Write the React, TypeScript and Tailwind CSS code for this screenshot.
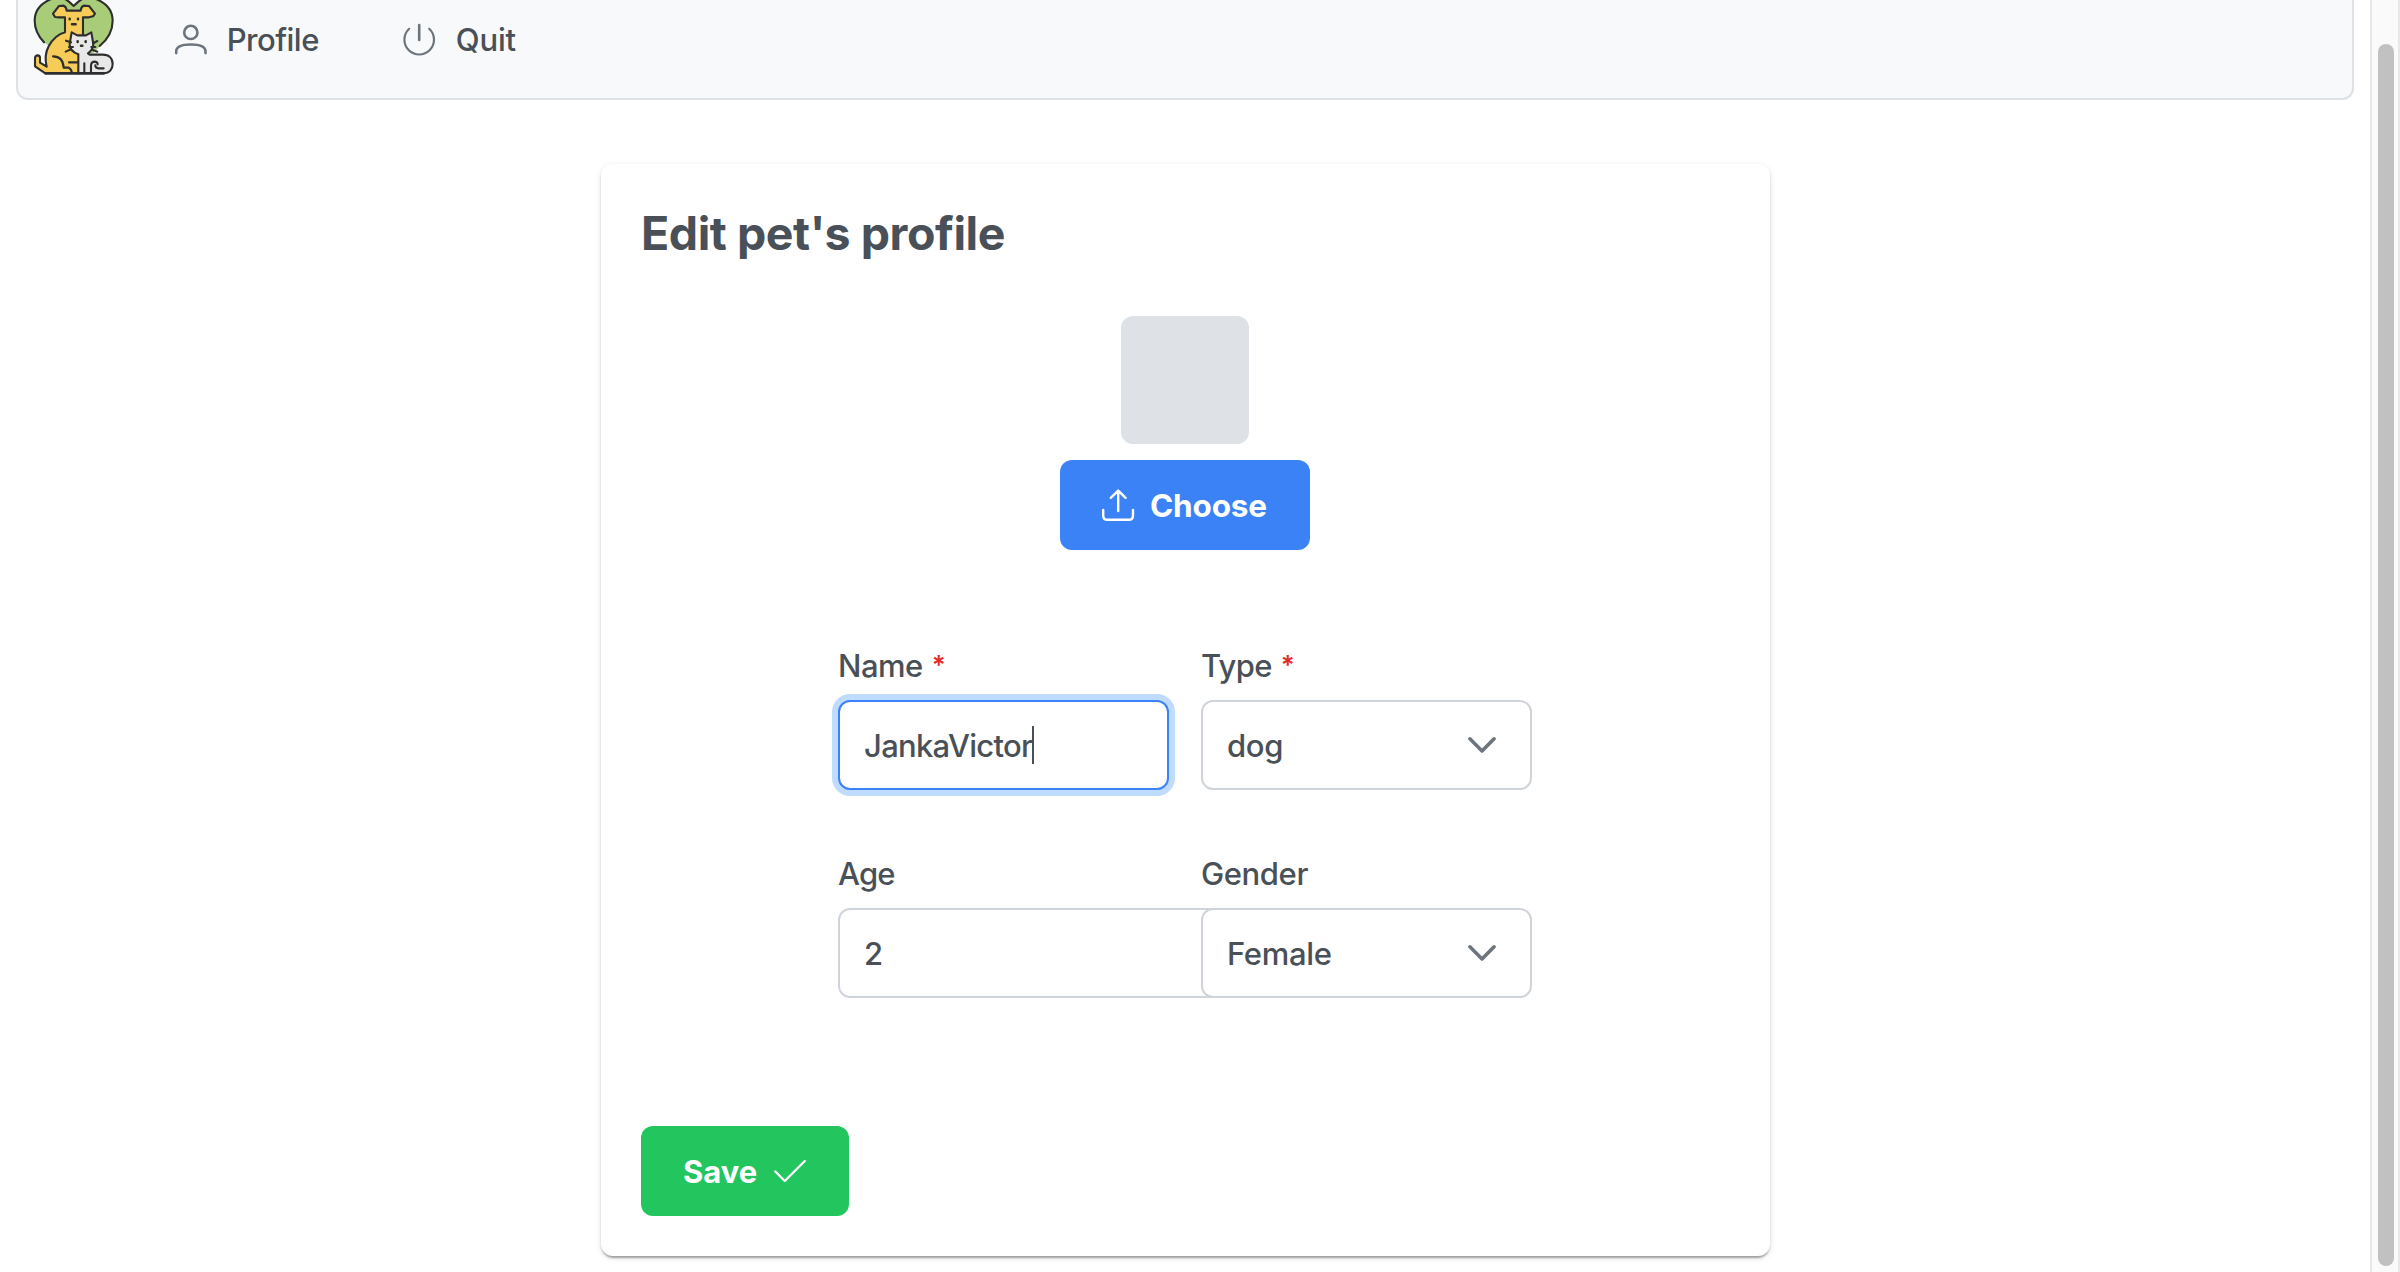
import { type ReactNode } from "react";

function PetsLogo() {
  return (
    <svg viewBox="100 0 245 226" width="81.67" height="75.33" className="block" fill="none" stroke="#2e2e2e" strokeWidth="6.3" strokeLinecap="round" strokeLinejoin="round">
      <path d="M133 127C112 104 105 84 105 62C105 28 130 6 160-5C190-16 210 6 222 18C234 6 254-16 284-5C314 6 339 28 339 62C339 90 325 115 302 137L280 160H180Z" fill="#a9cc78" stroke="none" />
      <path d="M133 127C112 104 105 84 105 62C105 28 130 6 160-5C190-16 210 6 222 18C234 6 254-16 284-5C314 6 339 28 339 62C339 92 325 117 300 138" />
      <path d="M196 97V52H178L166 51L160 41L178 18L192 17Q200 20 201 32H243Q244 20 252 17L268 18L286 41L280 49L268 52H250V108L237 220H137L106 199V174Q107 166 114 166Q121 166 121 174V188L141 200C137 184 137 158 147 139C158 119 174 103 196 97Z" fill="#f6cb58" />
      <path d="M160 169Q190 169 192 203H207Q215 207 217 219M208 187H234" />
      <path d="M236 220V163Q209 153 210 132L216 97L233 106H259L275 97L281 132Q281 148 265 160L270 164H309C328 164 339 175 339 192C339 208 329 220 312 220Z" fill="#e8e8e8" />
      <path d="M254 190V219M274 219V198Q274 185 286 185Q294 186 294 193M312 205H297Q287 205 287 196M199 122L214 127M198 155L214 148M208 141L220 141M280 130L293 123M275 141H287M278 149L293 155" />
      <path d="M137 220H312M210 56V58M235 56V58M217 73H228M234 124V126M258 124V126M244 137H248" strokeWidth="7.5" />
    </svg>
  );
}

const iconBase = "block shrink-0 overflow-visible";

function UserIcon() {
  return (
    <svg className={iconBase} width="32" height="32" viewBox="0 0 32 32" fill="none" stroke="#6c757d" strokeWidth="2.6" strokeLinecap="round">
      <circle cx="15.8" cy="8.4" r="6.6" />
      <path d="M1.2 29.1V27.5C1.2 22.4 6 20.5 15.8 20.5S30.5 22.4 30.5 27.5V29.1" />
    </svg>
  );
}

function PowerIcon() {
  return (
    <svg className={iconBase} width="32" height="32" viewBox="0 0 32 32" fill="none" stroke="#6c757d" strokeWidth="2.2" strokeLinecap="round">
      <path d="M16.2 1.1V15.9" strokeWidth="2.6" />
      <path d="M6.2 4.8A14.8 14.8 0 1 0 26.2 4.8" />
    </svg>
  );
}

function UploadIcon() {
  return (
    <svg className={iconBase} width="32" height="32" viewBox="0 0 32 32" fill="none" stroke="#fff" strokeWidth="2.4" strokeLinecap="round" strokeLinejoin="round">
      <path d="M16.2 22V1.6M8.8 8.8L16.2 1.6L23.6 8.8M1.2 21V26.5Q1.2 30.8 5.5 30.8H26.7Q31 30.8 31 26.5V21" />
    </svg>
  );
}

function CheckIcon() {
  return (
    <svg className={iconBase} width="32" height="32" viewBox="0 0 32 32" fill="none" stroke="#fff" strokeWidth="2.3" strokeLinecap="round" strokeLinejoin="round">
      <path d="M1.3 16.5L10.8 26L30.8 6" />
    </svg>
  );
}

function ChevronIcon() {
  return (
    <svg className={iconBase} width="28" height="28" viewBox="0 0 28 28" fill="none" stroke="#6c757d" strokeWidth="3.6" strokeLinecap="round" strokeLinejoin="round">
      <path d="M1.9 7.8L14 19.9L26.1 7.8" />
    </svg>
  );
}

function Field({ label, required, tracking = "", children }: { label: string; required?: boolean; tracking?: string; children: ReactNode }) {
  return (
    <div className="w-[331px]">
      <div className="flex h-12 items-center whitespace-nowrap">
        <span className={tracking}>{label}</span>
        {required && <span className="mb-[3px] ml-[9px] text-[26px] font-semibold leading-[40px] text-[#e12d2d]">*</span>}
      </div>
      <div className="mt-[10px]">{children}</div>
    </div>
  );
}

function Dropdown({ value, tracking = "" }: { value: string; tracking?: string }) {
  return (
    <div className="relative flex h-[90px] items-center justify-between rounded-xl border-2 border-[#ced4da] bg-white pl-6 pr-[34px]">
      <span className={tracking}>{value}</span>
      <ChevronIcon />
    </div>
  );
}

export default function App() {
  return (
    <div className="flex h-[1272px] w-[2400px] overflow-hidden bg-white font-['Inter',sans-serif] text-[31px] font-[450] text-[#495057]">
      <main className="w-[2370px]">
        <header className="ml-4 flex h-[100px] w-[2338px] rounded-b-xl border-2 border-t-0 border-[#dee2e6] bg-[#f8f9fb] pl-[15px]">
          <PetsLogo />
          <nav className="flex h-20 items-center">
            <div className="ml-[60px] flex items-center"><UserIcon /><span className="ml-5 tracking-[-0.5px]">Profile</span></div>
            <div className="ml-[84px] flex items-center"><PowerIcon /><span className="ml-[21px] tracking-[-0.2px]">Quit</span></div>
          </nav>
        </header>
        <section className="ml-[601px] mt-16 h-[1092px] w-[1169px] rounded-xl bg-white px-10 shadow-[0_4px_2px_-2px_rgba(0,0,0,0.2),0_2px_2px_0_rgba(0,0,0,0.14),0_2px_6px_0_rgba(0,0,0,0.12)]">
          <h1 className="pt-10 text-[46.5px] font-bold leading-[58px] tracking-[-0.45px]">Edit pet's profile</h1>
          <div className="mt-[54px] flex w-[1088px] flex-col items-center">
            <div className="h-32 w-32 rounded-xl bg-[#dee2e6]" />
            <button className="mt-4 flex h-[90px] w-[250px] items-center rounded-xl bg-[#3b82f6] pl-[42px] font-bold text-white">
              <UploadIcon /><span className="ml-4 mt-px text-[31.5px] tracking-[-0.2px]">Choose</span>
            </button>
          </div>
          <div className="ml-[197px] mt-[92px] grid w-[694px] grid-cols-2 gap-x-8 gap-y-[60px]">
            <Field label="Name" required tracking="tracking-[-0.5px]">
              <div className="flex h-[90px] items-center rounded-xl border-2 border-[#3b82f6] bg-white pl-6 shadow-[0_0_0_6px_#bfdbfe]">
                <span className="mt-[3px] tracking-[-0.7px]">JankaVictor</span><span className="h-[38px] w-0.5 bg-[#495057]" />
              </div>
            </Field>
            <Field label="Type" required tracking="tracking-[-0.7px]"><Dropdown value="dog" tracking="mt-[3px] tracking-[-0.3px]" /></Field>
            <Field label="Age" tracking="tracking-[-0.8px]">
              <div className="flex h-[90px] w-[420px] items-center rounded-xl border-2 border-[#ced4da] bg-white pl-6"><span className="mt-[3px]">2</span></div>
            </Field>
            <Field label="Gender" tracking="tracking-[-0.4px]"><Dropdown value="Female" tracking="mt-[3px] tracking-[-0.3px]" /></Field>
          </div>
          <button className="mt-32 flex h-[90px] w-[208px] items-center rounded-xl bg-[#22c55e] pl-[42px] font-bold text-white">
            <span className="mt-[3px]">Save</span><span className="ml-[17px]"><CheckIcon /></span>
          </button>
        </section>
      </main>
      <aside className="h-full w-[30px] border-x-2 border-[#e8e8e8] bg-[#fafafa] pl-[6px] pt-11">
        <div className="h-[1222px] w-4 rounded-full bg-[#c1c1c1]" />
      </aside>
    </div>
  );
}
